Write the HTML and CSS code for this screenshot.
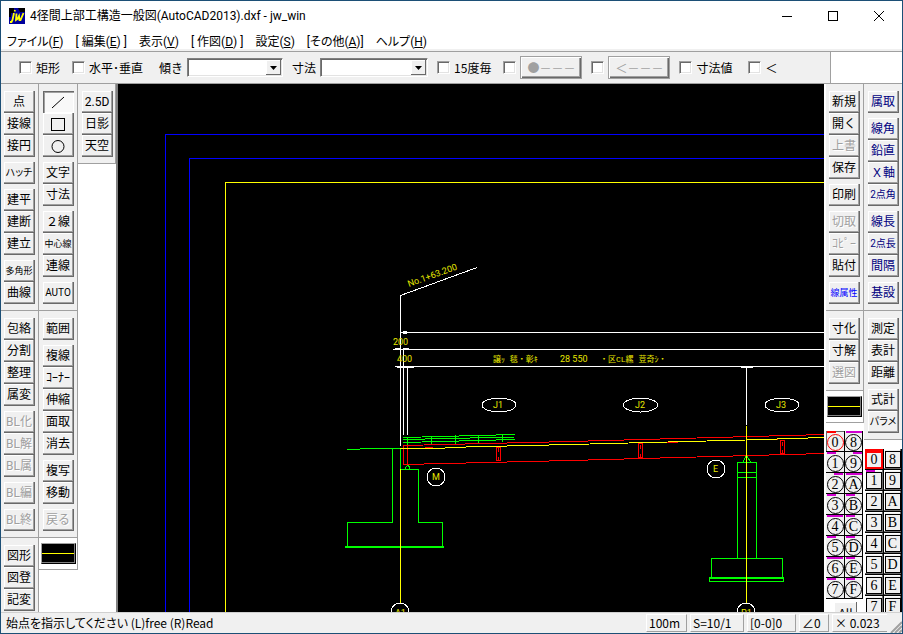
FILE: index.html
```html
<!DOCTYPE html>
<html lang="ja">
<head>
<meta charset="utf-8">
<title>4径間上部工構造一般図(AutoCAD2013).dxf - jw_win</title>
<link rel="stylesheet" href="styles.css">
</head>
<body>
<div class="window">
  <header class="titlebar">
    <svg class="logo" width="16" height="16" viewBox="0 0 16 16" aria-hidden="true">
      <rect width="16" height="16" fill="#00009c"/>
      <path d="M0 0h5v5H2v4H0zM9 0h7v4h-5z" fill="#000"/>
      <path d="M5 5l-1.500 7-1 2H1M6 2l-.4 1.500M7.500 5.500L7 12l1.500-1L10 8l.5 4h1L14.500 5" fill="none" stroke="#ff0" stroke-width="1.800"/>
    </svg>
    <h1 class="title">4径間上部工構造一般図(AutoCAD2013).dxf - jw_win</h1>
    <div class="captions">
      <button class="caption" aria-label="最小化"><svg width="12" height="12"><path d="M1 6.500h10" stroke="#000"/></svg></button>
      <button class="caption" aria-label="最大化"><svg width="12" height="12"><rect x="1.500" y="1.500" width="9" height="9" fill="none" stroke="#000"/></svg></button>
      <button class="caption" aria-label="閉じる"><svg width="12" height="12"><path d="M1 1l10 10M11 1L1 11" stroke="#000"/></svg></button>
    </div>
  </header>
  <nav class="menubar">
    <a href="#">ファイル(<u>F</u>)</a>
    <a href="#">[ 編集(<u>E</u>) ]</a>
    <a href="#">表示(<u>V</u>)</a>
    <a href="#">[ 作図(<u>D</u>) ]</a>
    <a href="#">設定(<u>S</u>)</a>
    <a href="#">[その他(<u>A</u>)]</a>
    <a href="#">ヘルプ(<u>H</u>)</a>
  </nav>
  <div class="controlrow">
    <form class="controlbar">
      <label class="check"><input type="checkbox">矩形</label>
      <label class="check mid"><input type="checkbox">水平･垂直</label>
      <label class="field wide" for="slope">傾き
        <span class="combo angle"><select id="slope"><option></option></select><svg class="arrow" width="15" height="15"><path d="M4 6h7L7.500 10z"/></svg></span></label>
      <label class="field" for="dim">寸法
        <span class="combo size"><select id="dim"><option></option></select><svg class="arrow" width="15" height="15"><path d="M4 6h7L7.500 10z"/></svg></span></label>
      <label class="check"><input type="checkbox">15度毎</label>
      <div class="check mid"><input type="checkbox" aria-label="端点"><button type="button" class="mark" disabled>●－－－</button></div>
      <div class="check"><input type="checkbox" aria-label="矢印"><button type="button" class="mark" disabled>＜－－－</button></div>
      <label class="check"><input type="checkbox">寸法値</label>
      <label class="check wide"><input type="checkbox">＜</label>
    </form>
  </div>
  <main class="workspace">
    <div class="dock">
      <section class="bar">
        <div class="group"><button>点</button><button>接線</button><button>接円</button></div>
        <div class="group"><button class="kana">ハッチ</button></div>
        <div class="group"><button>建平</button><button>建断</button><button>建立</button></div>
        <div class="group"><button class="tight">多角形</button><button>曲線</button></div>
      </section>
      <section class="bar">
        <div class="group"><button>包絡</button><button>分割</button><button>整理</button><button>属変</button></div>
        <div class="group"><button disabled>BL化</button><button disabled>BL解</button><button disabled>BL属</button></div>
        <div class="group"><button disabled>BL編</button></div>
        <div class="group"><button disabled>BL終</button></div>
      </section>
      <section class="bar">
        <div class="group"><button>図形</button><button>図登</button><button>記変</button></div>
      </section>
    </div>
    <div class="dock second">
      <section class="bar">
        <div class="group">
          <button class="pressed" aria-label="線"><svg width="16" height="16"><path d="M2 14L14 3" stroke="#000"/></svg></button>
          <button aria-label="矩形"><svg width="16" height="16"><rect x="1.500" y="2.500" width="13" height="12" fill="none" stroke="#000"/></svg></button>
          <button aria-label="円"><svg width="16" height="16"><circle cx="8" cy="8.500" r="6" fill="none" stroke="#000"/></svg></button>
        </div>
        <div class="group"><button>文字</button><button>寸法</button></div>
        <div class="group"><button>２線</button><button class="tight">中心線</button><button>連線</button></div>
        <div class="group"><button class="latin">AUTO</button></div>
      </section>
      <section class="bar">
        <div class="group"><button>範囲</button></div>
        <div class="group"><button>複線</button><button>ｺｰﾅｰ</button><button>伸縮</button><button>面取</button><button>消去</button></div>
        <div class="group"><button>複写</button><button>移動</button></div>
        <div class="group"><button disabled>戻る</button></div>
      </section>
      <section class="bar swatchbar"><button class="swatch" aria-label="線属性"></button></section>
    </div>
    <div class="dock third">
      <section class="bar">
        <div class="group"><button>2.5D</button><button>日影</button><button>天空</button></div>
      </section>
    </div>
    <div class="canvas">
      <svg width="100%" height="100%" role="img" aria-label="橋梁一般図">
        <g transform="translate(-118 -84)" fill="none" stroke-width="1" shape-rendering="crispEdges">
          <g stroke="#00f">
            <path d="M165.500 2000V134.500H3000M189.500 2000V158.500H3000"/>
          </g>
          <path d="M225.500 2000V182.500H3000" stroke="#ff0"/>
          <g stroke="#fff">
            <path d="M477 267.500L400.500 295.500V446M400 332.500H3000M393 349.500H3000M395 366.500H3000M395 348.500h5M403 348.500h6M397 367.500h17M403.500 348V435M407.500 367V435M746.500 367V425M741 367.500h12"/>
            <path d="M403 332.500h4" stroke-width="3"/>
            <ellipse cx="499" cy="405" rx="17" ry="7"/>
            <ellipse cx="640.500" cy="405" rx="17" ry="7"/>
            <ellipse cx="782" cy="405" rx="17" ry="7"/>
            <circle cx="436" cy="477" r="9"/>
            <circle cx="716" cy="469" r="9"/>
            <circle cx="400" cy="612" r="9"/>
            <circle cx="746" cy="612" r="9"/>
          </g>
          <g stroke="#0f0">
            <path d="M347 449.500L374 448.500H403M392.500 448V522.500H347.500V547M400.500 448V469.500H418.500V522.500H442.500V547"/>
            <path d="M345 547h99" stroke-width="2"/>
            <path d="M405 469l3-5 2 5M403 437.500L515 434.500M403 439.500L515 437M403 442.500L515 439.500M407.500 437v8M431.500 437v7M455.500 435v9M478.500 435v8M502.500 434v8"/>
            <path d="M743 462l3.500-7 4 7M737.500 558V462.500H756.500V558M737 472.500h20M737 477.500h20M711.500 578V558.500H782.500V578M709.500 578V581.500H783.500V578"/>
            <path d="M709 578h75" stroke-width="2"/>
          </g>
          <g stroke="#f00">
            <path d="M403 445.500L570 441.500L824 434.500L1600 414M403.500 445V464.500L570 460.500L824 453.500L1600 433M407.500 446V464"/>
            <path d="M425 447.500H433M509 445.500h8M551 444.500h13M662 442.500h16M760 439.500h18"/>
            <path d="M496.500 447.500h4v13h-4zM638.500 443.500h4v14h-4zM780.500 440.500h4v13h-4zM498.500 448v4M498.500 457v4M640.500 445v4M640.500 454v4M782.500 442v4M782.500 450v4"/>
          </g>
          <g stroke="#ff0">
            <path d="M400 448.500H434L466 447L570 444.500L746 440L824 437.500L1600 417M400.500 469V603M746.500 426V603"/>
          </g>
          <g class="cadtext">
            <text x="0" y="0" transform="translate(409 287) rotate(-20)">No.1+63.200</text>
            <text x="393" y="345">200</text>
            <text x="397" y="362">400</text>
            <text class="cjk" x="493" y="362">譲ｯ 毯・彰ｷ</text>
            <text x="560" y="362">28 550</text>
            <text class="cjk" x="600" y="362">・区CL縲 荳奇ｼ・</text>
            <text x="493" y="408">J1</text>
            <text x="635" y="408">J2</text>
            <text x="776" y="408">J3</text>
            <text x="432" y="480">M</text>
            <text x="713" y="472">E</text>
            <text x="395" y="616">A1</text>
            <text x="741" y="616">P1</text>
          </g>
        </g>
      </svg>
    </div>
    <div class="dock right">
      <section class="bar">
        <div class="group"><button>新規</button><button>開く</button><button disabled>上書</button><button>保存</button></div>
        <div class="group"><button>印刷</button></div>
        <div class="group"><button disabled>切取</button><button disabled>ｺﾋﾟｰ</button><button>貼付</button></div>
        <div class="group"><button class="tight bright">線属性</button></div>
      </section>
      <section class="bar">
        <div class="group"><button>寸化</button><button>寸解</button><button disabled>選図</button></div>
      </section>
      <section class="bar swatchbar"><button class="swatch" aria-label="線属性"></button></section>
      <section class="layers">
        <div class="grid round">
          <button class="current"><i class="left"></i><span>0</span></button><button><i></i><span>8</span></button>
          <button><i class="left"></i><span>1</span></button><button><i class="rightbar"></i><span>9</span></button>
          <button><i class="rightbar"></i><span>2</span></button><button><i></i><span>A</span></button>
          <button><i class="left"></i><span>3</span></button><button><i class="left"></i><span>B</span></button>
          <button><i></i><span>4</span></button><button><i class="left"></i><span>C</span></button>
          <button><i class="left"></i><span>5</span></button><button><i class="left"></i><span>D</span></button>
          <button><i></i><span>6</span></button><button><i class="left"></i><span>E</span></button>
          <button><i class="left"></i><span>7</span></button><button><i class="left"></i><span>F</span></button>
        </div>
        <button class="all">All</button>
      </section>
    </div>
    <div class="dock rightmost">
      <section class="bar navy">
        <div class="group"><button>属取</button></div>
        <div class="group"><button>線角</button><button>鉛直</button><button>Ｘ軸</button><button class="digit">2点角</button></div>
        <div class="group"><button>線長</button><button class="digit">2点長</button><button>間隔</button></div>
        <div class="group"><button>基設</button></div>
      </section>
      <section class="bar">
        <div class="group"><button>測定</button><button>表計</button><button>距離</button></div>
        <div class="group"><button>式計</button><button class="kana">パラメ</button></div>
      </section>
      <section class="layers">
        <div class="grid square">
          <button class="current"><i></i><span>0</span></button><button><span>8</span></button>
          <button><i class="left"></i><span>1</span></button><button><span>9</span></button>
          <button><span>2</span></button><button><span>A</span></button>
          <button><span>3</span></button><button><span>B</span></button>
          <button><span>4</span></button><button><span>C</span></button>
          <button><span>5</span></button><button><span>D</span></button>
          <button><span>6</span></button><button><span>E</span></button>
          <button><span>7</span></button><button><span>F</span></button>
        </div>
      </section>
    </div>
  </main>
  <footer class="status">
    <p class="message">始点を指示してください (L)free (R)Read</p>
    <button class="pane paper">100m</button>
    <button class="pane scale">S=10/1</button>
    <button class="pane layer">[0-0]0</button>
    <button class="pane angle">∠0</button>
    <button class="pane zoom">× 0.023</button>
    <svg class="grip" width="12" height="12"><path d="M1 12L12 1M5 12l7-7M9 12l3-3" stroke="#a0a0a0" stroke-width="2"/></svg>
  </footer>
</div>
</body>
</html>
```

FILE: styles.css
```css
* {
  box-sizing: border-box;
}

body {
  margin: 0;
  font-family: "Noto Sans CJK JP", sans-serif;
  font-size: 12px;
  line-height: 16px;
  color: #000;
}

button,
select,
input {
  margin: 0;
  padding: 0;
  font: inherit;
  color: inherit;
}

.window {
  display: flex;
  flex-direction: column;
  height: 100vh;
  border: 1px solid #1c4f76;
  background: #fff;
  overflow: hidden;
}

.titlebar {
  display: flex;
  align-items: center;
  height: 30px;
  flex: none;
  padding-left: 8px;
  gap: 5px;
}

.title {
  flex: 1;
  margin: 0;
  font-family: Roboto, "Noto Sans CJK JP", sans-serif;
  font-size: 12px;
  font-weight: 400;
  white-space: nowrap;
}

.captions {
  display: flex;
}

.caption {
  display: grid;
  place-items: center;
  width: 46px;
  height: 28px;
  border: 0;
  background: none;
}

.menubar {
  display: flex;
  align-items: center;
  flex: none;
  gap: 12px;
  height: 20px;
  padding: 2px 0 0 6px;
  box-shadow: inset 0 -2px #f0f0f0;
  font-family: Roboto, "Noto Sans CJK JP", sans-serif;
  font-feature-settings: "palt";
}

.menubar a {
  color: inherit;
  text-decoration: none;
  white-space: nowrap;
}

.controlrow {
  display: flex;
  flex: none;
  height: 33px;
  border-top: 1px solid #a0a0a0;
  border-bottom: 1px solid #a0a0a0;
}

.controlbar {
  display: flex;
  align-items: center;
  gap: 9px;
  width: 830px;
  padding-left: 18px;
  border-right: 1px solid #a0a0a0;
  background: #f0f0f0;
  white-space: nowrap;
}

.check,
.field {
  display: flex;
  align-items: center;
  gap: 4px;
}

.mid {
  margin-left: 3px;
}

.wide {
  margin-left: 7px;
}

.check input {
  appearance: none;
  width: 13px;
  height: 13px;
  border: 1px solid #a0a0a0;
  border-right-color: #fff;
  border-bottom-color: #fff;
  background: #fff;
  box-shadow: inset 1px 1px #696969, inset -1px -1px #e3e3e3;
}

.combo {
  position: relative;
  display: flex;
  height: 19px;
}

.combo.angle {
  width: 96px;
}

.combo.size {
  width: 108px;
}

.combo select {
  appearance: none;
  width: 100%;
  border: 1px solid #808080;
  border-right-color: #fff;
  border-bottom-color: #fff;
  border-radius: 0;
  background: #fff;
  box-shadow: inset 1px 1px #696969, inset -1px -1px #e3e3e3;
}

.arrow {
  position: absolute;
  top: 2px;
  right: 2px;
  background: #f0f0f0;
  box-shadow: inset -1px -1px #696969, inset 1px 1px #fff;
  pointer-events: none;
}

.mark {
  width: 62px;
  height: 23px;
  border: 1px solid #a0a0a0;
  background: #f0f0f0;
  box-shadow: inset 1px 1px #fff, inset -1px -1px #696969, inset -2px -2px #a0a0a0;
  color: #a0a0a0;
}

.workspace {
  display: flex;
  flex: 1;
  min-height: 0;
}

.dock {
  width: 38px;
  flex: none;
  overflow: hidden;
}

.dock.second {
  width: 39px;
}

.bar {
  display: flex;
  flex-direction: column;
  gap: 5px;
  padding: 7px 0 6px 3px;
  border-right: 1px solid #a0a0a0;
  border-bottom: 1px solid #a0a0a0;
  background: #f0f0f0;
}

.second .bar,
.third .bar,
.rightmost .bar {
  padding-left: 4px;
}

.rightmost .bar {
  border-right: 0;
}

.group {
  display: flex;
  flex-direction: column;
}

.group button {
  display: grid;
  place-items: center;
  width: 31px;
  height: 22px;
  padding: 0 1px 0 0;
  border: 0;
  background: #f0f0f0;
  box-shadow: inset -1px -1px #696969, inset -2px -2px #a0a0a0, inset 1px 1px #fff;
  font-family: Roboto, "Noto Sans CJK JP", sans-serif;
  white-space: nowrap;
}

.group button:disabled {
  color: #a0a0a0;
  text-shadow: 1px 1px #fff;
}

.group .pressed {
  background: #f8f8f8;
  box-shadow: inset 1px 1px #696969, inset 2px 2px #a0a0a0, inset -1px -1px #fff;
}

.group .tight {
  font-size: 9px;
}

.group .kana {
  font-size: 10px;
  font-feature-settings: "palt";
}

.group .digit,
.group .latin {
  font-size: 10px;
}

.navy button {
  color: #000080;
}

.group .bright {
  color: #00f;
}

.bar.swatchbar {
  padding: 5px 0 5px 1px;
  background: #fff;
}

.second .bar.swatchbar {
  padding-left: 2px;
}

.swatch {
  width: 35px;
  height: 21px;
  border: 1px solid #a0a0a0;
  border-right-color: #000;
  border-bottom-color: #000;
  background: linear-gradient(#ff0, #ff0) center / 100% 1px no-repeat #000;
  box-shadow: inset -1px -1px #808080;
}

.canvas {
  flex: 1;
  min-width: 0;
  border-left: 2px solid #808080;
  background: #000;
  overflow: hidden;
}

.canvas svg {
  display: block;
}

.cadtext text {
  fill: #e8e800;
  stroke: none;
  font-family: Roboto, "Noto Sans CJK JP", sans-serif;
  font-size: 9px;
  white-space: pre;
}

.cadtext .cjk {
  font-family: "Liberation Mono", "Noto Sans CJK JP", monospace;
  font-size: 8px;
}

.dock.right {
  width: 40px;
  border-left: 2px solid #fff;
}

.layers {
  padding-top: 8px;
}

.rightmost .layers {
  padding: 9px 0 0 1px;
}

.grid {
  display: grid;
  grid-template-columns: 19px 18px;
  grid-auto-rows: 21px;
}

.grid button {
  position: relative;
  display: grid;
  place-items: end center;
  border: 0;
  border-right: 1px solid #000;
  border-bottom: 1px solid #000;
  background: #f0f0f0;
  font-family: "Liberation Serif", serif;
  font-size: 14px;
  line-height: 16px;
}

.grid span {
  border: 1px solid #000;
  width: 17px;
  height: 17px;
}

.round span {
  border-radius: 50%;
  line-height: 15px;
}

.round i,
.square i {
  position: absolute;
  top: 0;
  left: 1px;
  width: 16px;
  height: 2px;
  background: #d000d0;
}

.round .left,
.square .left {
  width: 9px;
}

.round .rightbar {
  left: 8px;
  width: 9px;
}

.round .current {
  box-shadow: inset 1px 1px #696969;
}

.round .current span {
  border-color: #f00;
}

.grid .current i {
  background: #f00;
}

.square button {
  place-items: center;
  box-shadow: inset -1px -1px #696969, inset 1px 1px #fff;
}

.square span {
  width: 16px;
  height: 17px;
  line-height: 15px;
}

.square .current {
  box-shadow: inset 0 0 0 1px #f00;
}

.square .current span {
  border-color: #f00;
}

.square .current i {
  height: 4px;
}

.all {
  display: block;
  width: 23px;
  height: 22px;
  margin: 3px 0 0 8px;
  border: 0;
  background: #f0f0f0;
  box-shadow: inset -1px -1px #696969, inset 1px 1px #fff;
}

.status {
  display: flex;
  align-items: center;
  flex: none;
  gap: 3px;
  height: 21px;
  border-top: 1px solid #d0d0d0;
  background: #f0f0f0;
  white-space: nowrap;
}

.message {
  flex: 1;
  margin: 0;
  padding-left: 5px;
  font-feature-settings: "palt";
}

.pane {
  height: 18px;
  border: 1px solid #fff;
  border-right-color: #a0a0a0;
  border-bottom-color: #a0a0a0;
  background: #f0f0f0;
  text-align: left;
  padding-left: 2px;
}

.paper {
  width: 41px;
}

.scale {
  width: 54px;
}

.layer {
  width: 49px;
}

.pane.angle {
  width: 30px;
}

.zoom {
  width: 55px;
  border-right: 0;
}

.grip {
  align-self: flex-end;
}
```
